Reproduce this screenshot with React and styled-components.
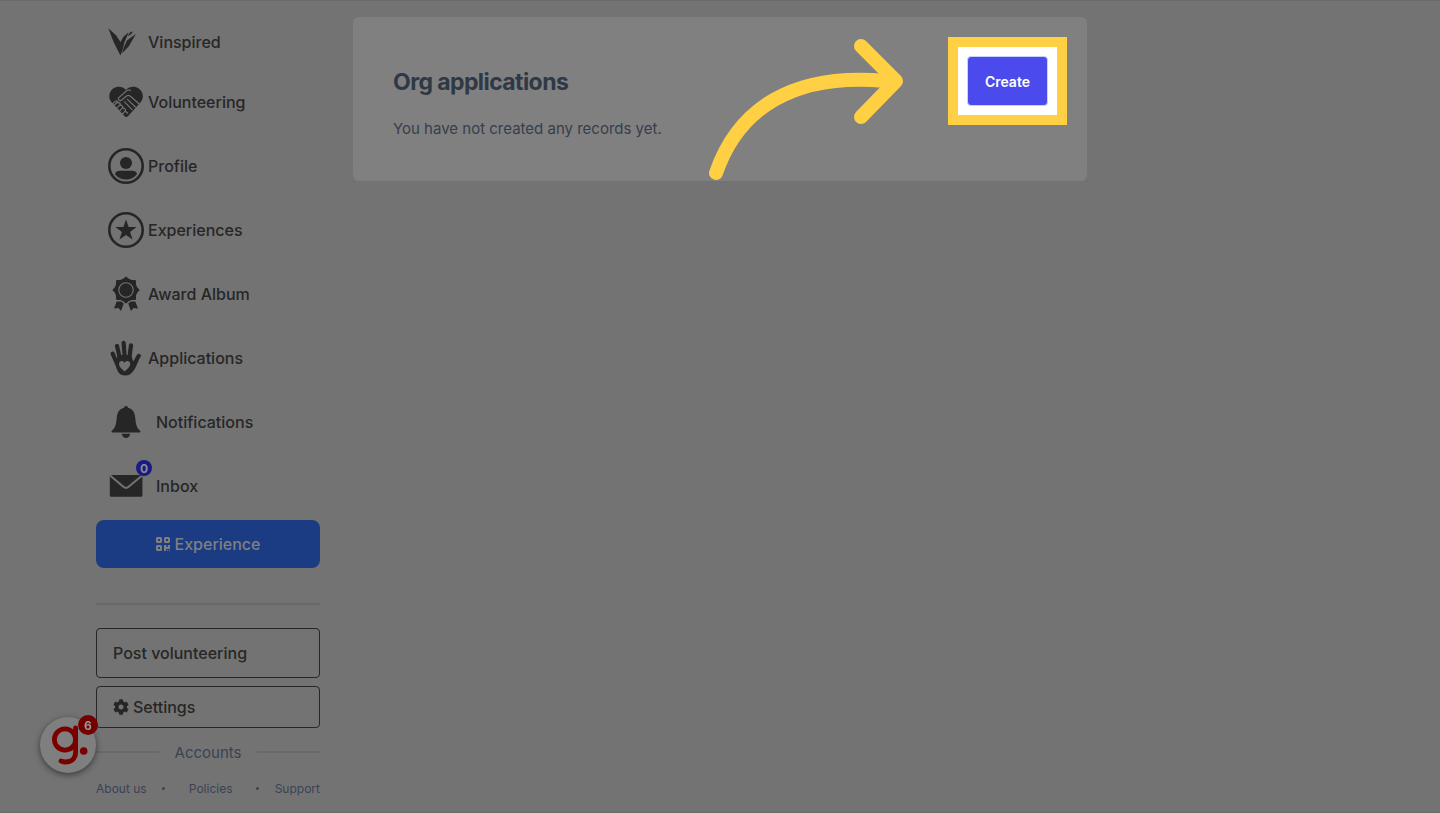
import styled, { createGlobalStyle } from 'styled-components';
import { FaCog } from 'react-icons/fa';

const GlobalStyle = createGlobalStyle`
  * {
    box-sizing: border-box;
  }

  body {
    margin: 0;
    background: #737373;
    color: #262626;
    font-family: Inter, 'Liberation Sans', sans-serif;
    font-size: 16px;
  }

  a {
    color: inherit;
    text-decoration: none;
  }

  button {
    font-family: inherit;
    cursor: pointer;
  }
`;

const StyledPage = styled.div`
  display: grid;
  grid-template-columns: 224px minmax(0, 1fr) 224px;
  gap: 33px;
  align-items: start;
  min-height: 100vh;
  padding: 0 96px;
  border-top: 1px solid #6b6b6b;
  border-bottom: 1px solid #6b6b6b;
`;

const StyledSidebar = styled.aside`
  display: flex;
  flex-direction: column;
  padding-top: 13px;
`;

const StyledNav = styled.nav`
  display: flex;
  flex-direction: column;
`;

const StyledNavLink = styled.a`
  display: flex;
  align-items: center;
  gap: ${(props) => (props.$wide ? '12px' : '4px')};
  height: ${(props) => (props.$short ? '56px' : '64px')};
  padding-left: 12px;
  font-weight: 500;
`;

const StyledIconBox = styled.span`
  position: relative;
  display: flex;
  width: 36px;
  height: 36px;
`;

const StyledCount = styled.span`
  position: absolute;
  top: -8px;
  right: -8px;
  display: flex;
  align-items: center;
  justify-content: center;
  width: 16px;
  height: 16px;
  border-radius: 50%;
  background: #1a1a85;
  color: #8c8c8c;
  font-size: 12px;
  font-weight: 700;
`;

const StyledExperience = styled.button`
  display: flex;
  align-items: center;
  justify-content: center;
  gap: 4px;
  height: 48px;
  margin-top: 2px;
  border: 0;
  border-radius: 8px;
  background: #1b3b82;
  color: #808080;
  font-size: 16px;
  font-weight: 500;
`;

const StyledRule = styled.hr`
  width: 100%;
  height: 2px;
  margin: 35px 0 23px;
  border: 0;
  background: #696969;
`;

const StyledOutlineButton = styled.button`
  display: flex;
  align-items: center;
  gap: 4px;
  height: ${(props) => (props.$tall ? '50px' : '42px')};
  margin-bottom: 8px;
  padding: 0 16px;
  border: 1px solid #262626;
  border-radius: 4px;
  background: transparent;
  color: #262626;
  font-size: 16px;
  font-weight: 500;
`;

const StyledDivider = styled.div`
  display: flex;
  align-items: center;
  gap: 16px;
  height: 32px;
  color: #3a4353;
  font-size: 15px;

  &::before,
  &::after {
    content: '';
    flex: 1;
    height: 2px;
    background: #696969;
  }
`;

const StyledFooter = styled.footer`
  display: flex;
  align-items: center;
  justify-content: space-between;
  height: 24px;
  margin-top: 8px;
  color: #3a4353;
  font-size: 12px;
`;

const StyledFooterLink = styled.a`
  padding: ${(props) => (props.$middle ? '0 8px' : '0')};
`;

const StyledDot = styled.span`
  width: 3px;
  height: 3px;
  border-radius: 50%;
  background: #3a4353;
`;

const StyledCard = styled.main`
  position: relative;
  display: flex;
  align-items: flex-start;
  justify-content: space-between;
  margin-top: 16px;
  padding: 20px 20px 40px 40px;
  border-radius: 6px;
  background: #808080;
`;

const StyledCardText = styled.div`
  padding-top: 29px;
  color: #363e4c;
`;

const StyledTitle = styled.h1`
  margin: 0 0 19px;
  color: #2f3845;
  font-size: 23px;
  font-weight: 700;
  line-height: 32px;
  letter-spacing: -0.025em;
`;

const StyledMessage = styled.p`
  margin: 0;
  font-size: 15px;
  line-height: 24px;
`;

const StyledHighlight = styled.div`
  padding: 9px;
  border: 10px solid #ffd043;
  background: #ffffff;
`;

const StyledCreate = styled.button`
  display: block;
  height: 50px;
  padding: 0 17px;
  border: 1px solid #c7d2fe;
  border-radius: 4px;
  background: #4b4aed;
  color: #ffffff;
  font-size: 14px;
  font-weight: 600;
`;

const StyledArrow = styled.svg`
  position: absolute;
  top: 19px;
  right: 180px;
  width: 206px;
  height: 148px;
`;

const StyledWidget = styled.button`
  position: fixed;
  bottom: 40px;
  left: 40px;
  width: 56px;
  height: 56px;
  padding: 0;
  border: 0;
  border-radius: 50%;
  background: #7f7f7f;
  box-shadow: 0 2px 6px rgba(0, 0, 0, 0.5);
`;

const StyledWidgetCount = styled.span`
  position: absolute;
  top: -2px;
  right: -2px;
  display: flex;
  align-items: center;
  justify-content: center;
  width: 20px;
  height: 20px;
  border-radius: 50%;
  background: #730000;
  color: #999999;
  font-size: 12px;
  font-weight: 700;
`;

function Icon({ children }) {
  return (
    <svg width="36" height="36" viewBox="0 0 36 36" fill="#262626" aria-hidden="true">
      {children}
    </svg>
  );
}

const VinspiredIcon = () => (
  <Icon>
    <path d="M0.3 4.3 8 11.3 12.6 18 15.2 13 20.6 8.3 16.4 18.5 14.6 26 12.4 31.6 5.6 18Z" />
    <path d="M27.8 10 19 16.6 15.8 23.4 14 29.4 21 22Z" />
    <path d="M19.4 12.2 22 8.6 25.4 7.2 22.8 10.4Z" />
  </Icon>
);

const VolunteeringIcon = () => (
  <Icon>
    <path d="M18 6C14.8 2.3 9 1.8 5.2 4.6 0.9 7.8 0 13.6 3.2 17.8L6.5 21.2 17 32.4C18 33.4 19.2 33 20 32.2L32.6 18.2C36.2 14 35.4 8 30.8 4.6 27 1.8 21.2 2.3 18 6Z" />
    <g fill="none" stroke="#737373" strokeWidth="1.2" strokeLinecap="round" strokeLinejoin="round">
      <path d="M22.4 6.4C20.8 5.6 19.2 6.2 18 7.3L10.8 13.6C9.6 15.4 11.4 17.6 13.4 16.2L18.2 12.2C19.6 11 21.2 11.2 22.4 12.3L31 19.8" />
      <path d="M19.4 15.4 27.4 23M16.6 17.8 24 25.6" />
      <path d="M9.4 18 6.2 21.4M12 20.8 8.6 24.4M14.6 23.8 11.2 27.4M17.4 26.8 14 30.4" />
      <path d="M5 19.6 7.4 17.2C8.4 16.4 10.4 17.4 9.6 18.8M9.8 18.6C11.4 18.2 12.9 19.8 12.2 21.2 14 21 15.4 22.6 14.8 24.2 16.6 24 18 25.6 17.4 27.2L19.8 29.4" />
    </g>
    <path
      d="M3.4 20.2 6 22.6M6 23 8.4 25.6M8.6 26.2 11 28.8M11.4 29.2 13.8 31.6"
      fill="none"
      stroke="#737373"
      strokeWidth="1"
    />
  </Icon>
);

const ProfileIcon = () => (
  <Icon>
    <circle cx="18" cy="18" r="16.7" fill="none" stroke="#262626" strokeWidth="2.6" />
    <circle cx="18" cy="15" r="6" />
    <path d="M7 26.2C7.4 23.6 9.4 22.7 12 22.7H24C26.6 22.7 28.6 23.6 29 26.2 23.8 33.2 12.2 33.2 7 26.2Z" />
  </Icon>
);

const ExperiencesIcon = () => (
  <Icon>
    <circle cx="18" cy="18" r="16.7" fill="none" stroke="#262626" strokeWidth="2.6" />
    <path d="M18 7.5 20.6 15.1H28.5L22.1 19.9 24.5 27.6 18 23 11.5 27.6 13.9 19.9 7.5 15.1H15.4Z" />
  </Icon>
);

const AwardIcon = () => (
  <Icon>
    <circle cx="18" cy="14" r="11.4" />
    <g stroke="#262626" strokeWidth="2.4" strokeLinejoin="round">
      <path d="M9.2 5.2H26.8V22.8H9.2Z" />
      <path d="M18 1.8 30.2 14 18 26.2 5.8 14Z" />
    </g>
    <circle cx="18" cy="14" r="7.2" fill="none" stroke="#737373" strokeWidth="1.1" />
    <path d="M8.7 25.6 13.2 25.6 15.8 27.4 13 35 10.5 31.9 6 32.6Z" />
    <path d="M27.3 25.6 22.8 25.6 20.2 27.4 23 35 25.5 31.9 30 32.6Z" />
  </Icon>
);

const ApplicationsIcon = () => (
  <Icon>
    <g fill="none" stroke="#262626" strokeWidth="4.2" strokeLinecap="round">
      <path d="M4.6 13.6 9.2 24" />
      <path d="M9 6 12 19" />
      <path d="M15.6 2.9 16.8 18" />
      <path d="M23 5.4 21.2 19" />
      <path d="M30.8 15.9C28.4 18.6 27.5 24 24.5 28.5" />
    </g>
    <path d="M8 20 10.6 15H23L25.2 21 28 19.4C28.2 27 25 35.6 17.2 35.6 10 35.6 8.6 29.5 6.8 22Z" />
    <path
      fill="#737373"
      d="M16.6 31.4C13 28.5 11 26.5 11 24 11 20.8 15 20 16.6 22.8 18.2 20 22.2 20.8 22.2 24 22.2 26.5 20.2 28.5 16.6 31.4Z"
    />
  </Icon>
);

const NotificationsIcon = () => (
  <Icon>
    <path d="M18 2C19.1 2 19.8 2.7 20 3.7 24.5 4.7 26.8 8.5 27.2 13.2 27.7 20.5 29 24 31.8 26.4 33.2 27.5 32.5 28.4 31.4 28.4H4.6C3.5 28.4 2.8 27.5 4.2 26.4 7 24 8.3 20.5 8.8 13.2 9.2 8.5 11.5 4.7 16 3.7 16.2 2.7 16.9 2 18 2Z" />
    <path d="M13.7 29.8H22.3C21.8 32.5 20.3 34 18 34S14.2 32.5 13.7 29.8Z" />
  </Icon>
);

const InboxIcon = () => (
  <Icon>
    <rect x="1.8" y="7" width="32.6" height="21.8" rx="1.4" />
    <path
      d="M2 7.4 15.4 18.7C17.2 20.3 18.8 20.3 20.6 18.7L34.2 7.4"
      fill="none"
      stroke="#737373"
      strokeWidth="2"
    />
  </Icon>
);

const QrIcon = () => (
  <svg width="15" height="15" viewBox="0 0 15 15" fill="#808080" aria-hidden="true">
    <g fill="none" stroke="#808080" strokeWidth="2">
      <rect x="1" y="1" width="4" height="4" rx="0.6" />
      <rect x="9" y="1" width="4" height="4" rx="0.6" />
      <rect x="1" y="9" width="4" height="4" rx="0.6" />
    </g>
    <path d="M8 8H10.5V10H12V8H14V12H10V14H8ZM11 13H12V14H11ZM13 13H14V14H13Z" />
  </svg>
);

const navItems = [
  { label: 'Vinspired', icon: VinspiredIcon, short: true },
  { label: 'Volunteering', icon: VolunteeringIcon },
  { label: 'Profile', icon: ProfileIcon },
  { label: 'Experiences', icon: ExperiencesIcon },
  { label: 'Award Album', icon: AwardIcon },
  { label: 'Applications', icon: ApplicationsIcon },
  { label: 'Notifications', icon: NotificationsIcon, wide: true },
  { label: 'Inbox', icon: InboxIcon, wide: true, count: 0 },
];

function Sidebar() {
  return (
    <StyledSidebar>
      <StyledNav>
        {navItems.map(({ label, icon: NavIcon, short, wide, count }) => (
          <StyledNavLink key={label} href="#" $short={short} $wide={wide}>
            <StyledIconBox>
              <NavIcon />
              {count !== undefined && <StyledCount>{count}</StyledCount>}
            </StyledIconBox>
            {label}
          </StyledNavLink>
        ))}
      </StyledNav>
      <StyledExperience type="button">
        <QrIcon />
        Experience
      </StyledExperience>
      <StyledRule />
      <StyledOutlineButton type="button" $tall>
        Post volunteering
      </StyledOutlineButton>
      <StyledOutlineButton type="button">
        <FaCog size={16} />
        Settings
      </StyledOutlineButton>
      <StyledDivider>Accounts</StyledDivider>
      <StyledFooter>
        <StyledFooterLink href="#">About us</StyledFooterLink>
        <StyledDot />
        <StyledFooterLink href="#" $middle>
          Policies
        </StyledFooterLink>
        <StyledDot />
        <StyledFooterLink href="#">Support</StyledFooterLink>
      </StyledFooter>
    </StyledSidebar>
  );
}

function OrgApplications() {
  return (
    <StyledCard>
      <StyledCardText>
        <StyledTitle>Org applications</StyledTitle>
        <StyledMessage>You have not created any records yet.</StyledMessage>
      </StyledCardText>
      <StyledHighlight>
        <StyledCreate type="button">Create</StyledCreate>
      </StyledHighlight>
      <StyledArrow
        viewBox="0 0 206 148"
        fill="none"
        stroke="#ffd043"
        strokeWidth="14"
        strokeLinecap="round"
        strokeLinejoin="round"
        aria-hidden="true"
      >
        <path d="M15 137C37 73 92 36 185 45" />
        <path d="M160 10 195 45 160 81" />
      </StyledArrow>
    </StyledCard>
  );
}

function HelpWidget() {
  return (
    <StyledWidget type="button" aria-label="Open guides">
      <svg width="56" height="56" viewBox="0 0 56 56" fill="none" stroke="#7a0000" strokeWidth="4.8">
        <circle cx="25" cy="22.5" r="10.6" />
        <path
          d="M35.6 11V35C35.6 42 31 45 25.5 45 23.6 45 22.4 44.6 21 44"
          strokeLinecap="round"
        />
        <circle cx="43.7" cy="34" r="3.8" fill="#7a0000" stroke="none" />
      </svg>
      <StyledWidgetCount>6</StyledWidgetCount>
    </StyledWidget>
  );
}

function App() {
  return (
    <>
      <GlobalStyle />
      <StyledPage>
        <Sidebar />
        <OrgApplications />
      </StyledPage>
      <HelpWidget />
    </>
  );
}

export default App;
